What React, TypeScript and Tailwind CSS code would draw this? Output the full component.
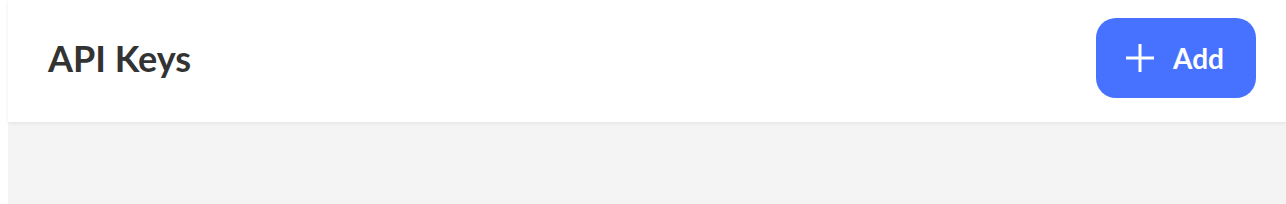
import React from "react";

export default function App() {
  return (
    <div className="flex h-[204px] w-full bg-white" style={{ fontFamily: "Lato, 'Open Sans', sans-serif" }}>
      <div className="w-2 shrink-0 bg-white" />
      <div className="flex min-w-0 flex-1 flex-col bg-[#f4f4f4]">
        <header className="relative flex h-[122px] shrink-0 items-center justify-between bg-white pb-[6px] pl-10 pr-[30px] shadow-[0_1px_4px_rgba(0,0,0,0.08)]">
          <h1 className="text-[36px] font-bold leading-none text-[#333333]">API Keys</h1>
          <button className="flex h-20 w-40 items-center justify-start gap-[19px] rounded-[20px] bg-[#4672ff] pl-[30px] text-white">
            <svg width="28" height="28" viewBox="0 0 28 28" fill="none" stroke="currentColor" strokeWidth="3">
              <path d="M14 0v28M0 14h28" />
            </svg>
            <span className="text-[28px] font-bold leading-none">Add</span>
          </button>
        </header>
      </div>
    </div>
  );
}
